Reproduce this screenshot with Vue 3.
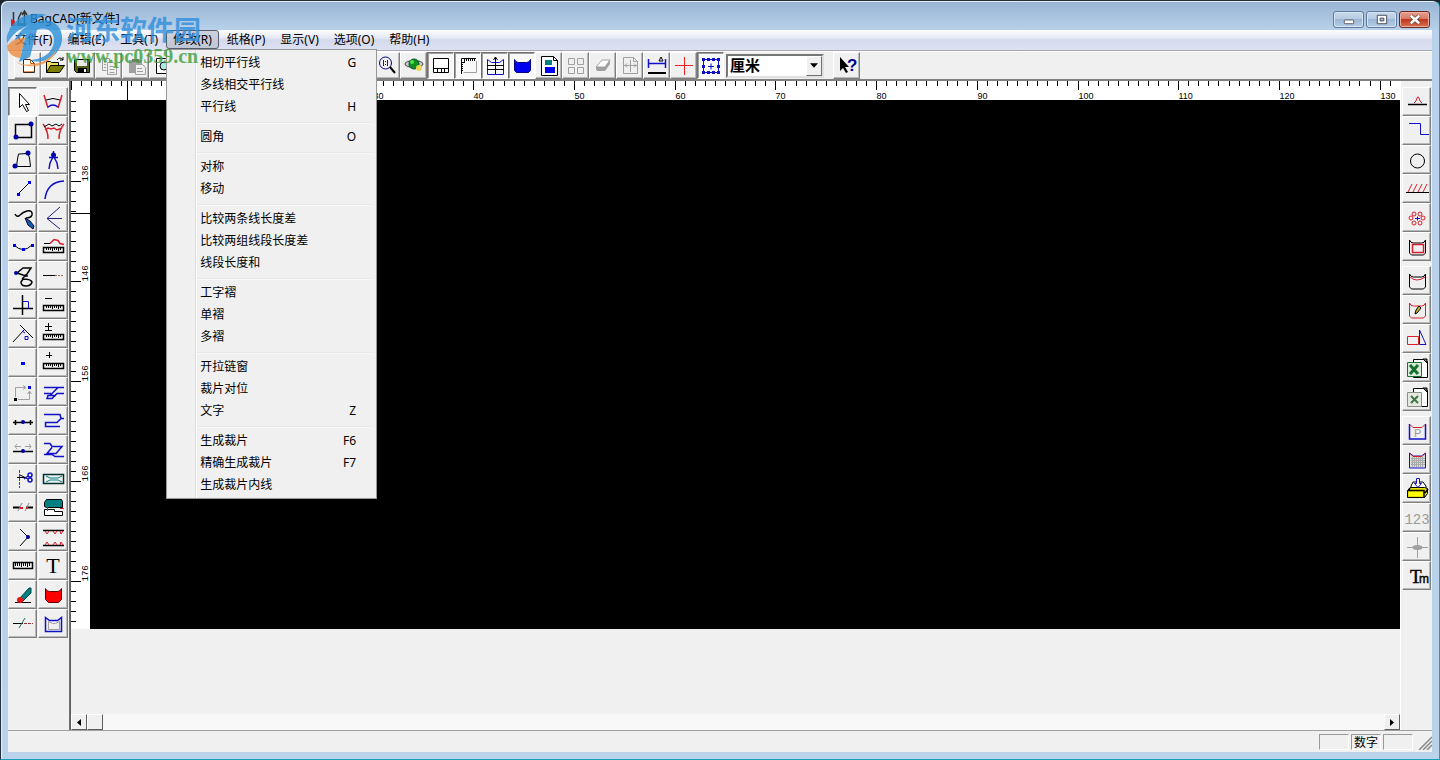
<script setup>
import { computed, onBeforeUnmount, onMounted, ref } from 'vue'

const unit = ref('厘米')

const menus = ['文件(F)', '编辑(E)', '工具(T)', '修改(R)', '纸格(P)', '显示(V)', '选项(O)', '帮助(H)']
const openMenu = '修改(R)'
const groups = [
  [['相切平行线', 'G'], ['多线相交平行线', ''], ['平行线', 'H']],
  [['圆角', 'O']],
  [['对称', ''], ['移动', '']],
  [['比较两条线长度差', ''], ['比较两组线段长度差', ''], ['线段长度和', '']],
  [['工字褶', ''], ['单褶', ''], ['多褶', '']],
  [['开拉链窗', ''], ['裁片对位', ''], ['文字', 'Z']],
  [['生成裁片', 'F6'], ['精确生成裁片', 'F7'], ['生成裁片内线', '']],
]

const line = (d, color = '#000', w = 1) => `<path d="${d}" fill="none" stroke="${color}" stroke-width="${w}"/>`
const fill = (d, color, stroke = 'none') => `<path d="${d}" fill="${color}" stroke="${stroke}"/>`
const dot = (x, y, r = 2, color = '#0000a8') => `<circle cx="${x}" cy="${y}" r="${r}" fill="${color}"/>`
const sq = (x, y, color = '#0000f0') => `<rect x="${x - 1}" y="${y - 1}" width="3" height="3" fill="${color}"/>`
const scale = (y) => line(`M2.5 ${y + 0.5}h20v5h-20z`, '#000', 1.5) + line(`M5.5 ${y + 3}v-2m2 2v-2m2 2v-2m2 3v-3m2 2v-2m2 2v-2m2 3v-3m2 2v-2`)
const RED = '#d8202c'
const BLUE = '#1010c8'
const GRAY = '#a0a0a0'
const TEAL = '#008080'
const pocket = 'M4.500 5q1 3 4 3h8q3 0 4-3v13l-2 2h-12l-2-2z'

const files = [
  { name: '新建', art: fill('M7.5 5.5h7l4 4v9h-11z', '#fff', '#3a2418') + line('M14.5 5.5v4h4', '#c86010') + line('M8 17.5h10', '#e09050') },
  { name: '打开', art: fill('M3.5 18.5v-11h4l1 1h7v3', '#f0e060', '#000') + fill('M3.5 18.5l4-7h14l-5 7z', '#808000', '#000') + line('M14 6q3-4 6 0m0-3v3h-3') },
  { name: '保存', art: fill('M4.5 5.5h15v13h-13l-2-2z', '#506018', '#000') + fill('M7 6h10v6H7z', '#e8e8e8') + fill('M8 14h9v5H8z', '#000') + fill('M14 15h2v3h-2z', '#fff') },
  { name: '复制', art: line('M5.5 4.5h7v3m-3 9h-4v-12M7 7.5h3m-3 3h2m-2 3h2M10.5 8.5h6l3 3v9h-9zm2 4h5m-5 3h5m-5 3h5', GRAY) },
  { name: '粘贴', art: fill('M5 6h13v13H5z', GRAY) + fill('M8 5h7v3H8z', '#777') + fill('M11.5 10.5h7l3 3v7h-10z', '#f0f0f0', GRAY) + line('M13 14.5h5m-5 3h6', GRAY) },
  { name: '预览', art: fill('M5.5 4.5h9l4 4v11h-13z', '#fff', '#000') + fill('M17 12a4 4 0 1 1-8 0a4 4 0 1 1 8 0', '#a8e8e8', '#000') },
]
const views = [
  { name: '缩放', art: line('M16.5 9a6 6 0 1 1-12 0a6 6 0 1 1 12 0', '#000090') + line('M8.5 6v6m4-6v6m-2-5v1m0 2v1', BLUE) + line('M15 13l5 6', '#000', 2) },
  { name: '视图', art: `<ellipse cx="12" cy="10" rx="9" ry="3.5" fill="#ccc" stroke="#444"/>` + fill('M17 10a5 5 0 1 1-10 0a5 5 0 1 1 10 0', '#109020', '#053') + dot(10, 8, 2, '#50e050') + dot(17, 14, 3, '#e8d850') },
  { name: '窗口', on: true, art: fill('M4.5 4.5h15v14h-15z', '#fff', '#000') + line('M4 14.5h16M8.5 15v4m4-4v4m3-4v4') },
  { name: '标尺', on: true, art: line('M20 4.5H5.5V20M8.5 4v4m2-4v3m2-3v3m2-3v3m2-3v3m2-3v3M5 8.5h4m-4 2h2m-2 2h2m-2 2h2m-2 2h2') + line('M20.5 7v11.5h-13', GRAY) },
  { name: '网格', on: true, art: line('M4.5 5.5l4 3h8l4-3v15h-16z', BLUE) + line('M4 11.5h17m-17 4h17M12.5 3v17m-2-14l2-3 2 3') },
  { name: '填充', on: true, art: fill('M4.5 5.5q1 3 4 3h8q3 0 4-3v11l-2 2h-12l-2-2z', '#0000f0', '#000080') },
  { name: '裁片', art: fill('M4.5 2.5h12l4 4v15h-16z', '#fff', '#000') + fill('M8 6h7v5H8z', TEAL) + fill('M8 13h10v6H8z', '#0000f0') + line('M16.5 2.5v4h4') },
  { name: '排列', art: line('M4.5 4.5h6v6h-6zm9 0h6v6h-6zm-9 9h6v6h-6zm9 0h6v6h-6z', GRAY) },
  { name: '橡皮', art: fill('M5 13l6-7h8l-5 7z', '#fff', GRAY) + fill('M5 13h9v4H6l-1-2zM14 13l5-7v4l-5 7z', GRAY) },
  { name: '页面', art: line('M5.5 3.5h10l4 4v12h-14zm10 0v4h4M6 11.5h13M12.5 6v12M9 9.5l-2 2 2 2M16 9.500l2 2-2 2', GRAY) },
  { name: '测量', art: line('M3.5 5v9m17-9v9M4 9.5h16', BLUE, 1.5) + line('M3 19h18', '#000', 2) + line('M14 7l2-4 2 4z') },
  { name: '十字', art: line('M3 11.5h18M12.5 3v18', '#f02020') },
  { name: '选框', on: true, art: line('M4.5 5.5h15v13h-15zM9 12.5h6m-3-3v6', BLUE) + [4, 9, 14, 19].map((x) => sq(x, 5, BLUE) + sq(x, 18, BLUE)).join('') + sq(4, 12, BLUE) + sq(19, 12, BLUE) },
]
const help = fill('M5 3v14l3-3 3 5 2-1-3-5h4z', '#000') + '<text x="12" y="17" font-size="17" font-weight="bold" fill="#000090" font-family="Liberation Sans, sans-serif">?</text>'

const leftTools = [
  ['选择', fill('M8.5 3.5v14l3-3 4 7 2-1-3-6h4z', '#fff', '#000'), true],
  ['弧边', line('M3 5l4 13M21 5l-4 13', RED, 1.5) + line('M5 10q7-3 14 0') + line('M7 17q5-4 10 0', BLUE, 1.5)],
  ['矩形', line('M4.5 5.5h16v13h-16z', '#000', 1.5) + dot(20, 5, 2.5) + dot(5, 18, 2.5)],
  ['褶边', line('M2 5q5 6 5 15M23 5q-5 6-5 15M4 11l3-2 3 1 3-1 3 2 5-2', RED, 1.5) + line('M3 8l5-3 3 2 4-2 3 2 3-2')],
  ['四边形', line('M17 5.5L7.5 6 6.5 11l-1 7.5h14L18.5 10z') + dot(17, 5, 2.5) + dot(4, 18, 2.5)],
  ['圆规', line('M12.5 3v4M8 9.5h9M12 9l-3 6-1 6M13 9l3 6 1 6', BLUE, 1.5) + dot(12.5, 7, 2.5)],
  ['直线', line('M7 17L18 6') + sq(7, 17) + sq(18, 5)],
  ['圆弧', line('M4 22Q6 5 23 4', BLUE, 1.5)],
  ['曲线', line('M4 8q2 4 5 1t7-4q6-1 5 4-1 3-6 3', '#000', 1.5) + fill('M14 12l5 3 4 5-1 3-5-4z', '#1060b0', '#003')],
  ['分线', line('M21 12.5H6M19 1L6 12.5 19 23', '#202080')],
  ['三点弧', line('M3 10q9 9 18 0') + sq(3, 10) + sq(12, 14) + sq(21, 10)],
  ['量曲线', line('M3 8.5h6') + line('M9 8.5l4-4 4 1 2 3 4 1', RED, 1.5) + scale(12)],
  ['自由曲线', line('M6 9l6-5h8l-4 6-5 5M6 9l6 2 5 1M12 15q8 0 9 3-1 4-6 4t-5-4z', '#000', 1.5) + dot(5, 9)],
  ['延长线', line('M2 11.5h12') + '<path d="M14 11.500h8" stroke="#a06050" stroke-dasharray="2 1"/>'],
  ['垂直线', line('M11.5 2v20M2 15.5h20', '#000', 1.5) + line('M11.5 8.5h6v7', BLUE)],
  ['减尺', line('M4 5.5h7') + scale(12)],
  ['角度', line('M2 20L13 8M9 3l13 13') + line('M11 9l3 2m0 3.5h3v3h-3z', BLUE)],
  ['加减尺', line('M4 4.5h7M7.5 1v7M4 8.5h7') + scale(12)],
  ['点', sq(11, 12) + sq(12, 12)],
  ['加尺', line('M5 4.5h6M8.5 1v6') + scale(12)],
  ['移点', line('M4.5 17V7.5H14m-2-2l3 2-3 2M7 19.5h11.5V12m-2 2l2-3 2 3', GRAY) + sq(4, 19, '#000') + sq(18, 7)],
  ['连接一', line('M3 7.5h20M17 7.5l-8 8M3 13.5h7M23 13.5h-7l-5 5H6l1-3h8', BLUE, 1.5)],
  ['线上点', line('M2 13.5h20M4.5 11v5M19.5 11v5', '#000', 1.5) + dot(12, 13)],
  ['连接二', line('M3 5.5h16l1 4h3M20 9.5l-4 4H4.5v4H19', BLUE, 1.5)],
  ['移动点', line('M2 13.5h20', '#000', 1.5) + line('M4 8.5h6m4 0h6M6 6L4 8.5 6 11M18 6l2 2.5-2 2.5', GRAY) + dot(12, 13)],
  ['连接三', line('M3 5.5h6l2 3h10l-6 7H6l5-6M3 16.500h8l3 2h9', BLUE, 1.5)],
  ['剪切', line('M6 10.5h9M9 8l8 4') + line('M13 12l4-3m4-1a2 2 0 1 1-4 0a2 2 0 1 1 4 0m0 5a2 2 0 1 1-4 0a2 2 0 1 1 4 0', BLUE, 1.5) + '<path d="M8.5 3v18" stroke="#803030" stroke-dasharray="3 1"/>'],
  ['拉链', line('M2.500 7.5h20v9h-20z', '#003030', 1.5) + line('M5 9l4 2h8l4-2M5 15l4-2h8l4 2', TEAL)],
  ['断开', line('M2 11.5h7M15 11.5h7', '#000', 2) + line('M7 15l4-8M14 15l4-8', '#888') + line('M9 12h3m3 0h2', RED, 2)],
  ['缝纫', fill('M5.5 3.5h15l1 2v6h-16l-2-1v-4z', TEAL, '#000') + fill('M3.5 13.5h10v2h8v4h-18z', '#fff', '#000') + line('M6.5 11v4M19 12.5h4', RED)],
  ['夹角', line('M9 4l8 8-8 9') + dot(17, 12)],
  ['花边', line('M2 5.5h21M2 20.5h21', '#000', 1.5) + line('M4 6l2 3 2-3m4 0l2 3 2-3m3 0l1 3 2-3M4 20l2-3 2 3m4 0l2-3 2 3m3 0l1-3 2 3', RED)],
  ['直尺', line('M2.5 8.5h19v6h-19z', '#000', 1.5) + line('M4.5 12V9m2 3V9m2 3V9m2 4V9m2 3V9m2 3V9m2 4V9m2 3V9')],
  ['文字', '<text x="12" y="19" text-anchor="middle" font-size="22" font-family="Liberation Serif, serif">T</text>'],
  ['擦除', line('M4 19.5h16') + fill('M9 15l9-10h2v5l-9 9z', TEAL, '#044') + dot(9, 17, 3, '#f01010')],
  ['实面', fill('M4.5 5.5q1 3 4 3h8q3 0 4-3v11l-3 3h-10l-3-3z', '#ff0000', '#600000')],
  ['分割', line('M2 11.5h10') + line('M8 16l6-10', '#207050') + '<path d="M13 11.5h9" stroke="#903030" stroke-dasharray="3 1"/>'],
  ['内框', line('M4.5 5.5l4 3h8l4-3v14h-16z', BLUE, 1.5) + line('M7.5 17.5v-8l4 2h3l4-2v8z', GRAY)],
].map(([name, art, on]) => ({ name, art, on }))

const sheet = fill('M8.5 3.5h12l2 2v16h-14z', '#fff', '#000') + fill('M18 3h4v4z', '#777', '#000')
const rightTools = [
  [
    ['凸点', line('M3 14.5h19', '#000', 1.5) + line('M9 13l2-2 1.5-4h1l1.500 4 2 2', RED)],
    ['折线', line('M4 4.5h11.500v11H24', BLUE)],
    ['圆', line('M19.500 13a7 7 0 1 1-14 0a7 7 0 1 1 14 0')],
    ['斜纹', line('M1 15.5h23') + line('M3 15l4-8m1 8l4-8m1 8l4-8m1 8l4-8', RED)],
    ['花形', [[6, 12], [9, 8], [15, 8], [18, 12], [15, 17], [9, 17]].map(([x, y]) => `<circle cx="${x}" cy="${y}" r="2" fill="none" stroke="${RED}"/>`).join('') + line('M10 12.500h5m-2.500-2v4', BLUE)],
    ['双框', line(pocket) + line('M7.500 9.500h11v8h-11z', RED, 1.5)],
  ],
  [
    ['边框', line(pocket) + line('M5 8q3 3 7 3t8-3', RED)],
    ['编辑边框', line(pocket, RED) + fill('M10 16l1-4 3-4 2 2-4 5z', '#c8b830', '#000')],
    ['镜像', line('M2.500 9.500h11v8h-11z', RED) + line('M14.500 3v14.500h6.500z', BLUE)],
    ['导出', sheet + fill('M2.500 6.500h14v14h-14z', '#d8ecd8', '#187030') + line('M5 9l8 9M13 9l-8 9', '#187030', 3)],
    ['导出二', sheet + fill('M2.500 7.500h14v14h-14z', '#e4e8e0', '#889080') + line('M6 11l7 7M13 11l-7 7', '#407848', 2)],
  ],
  [
    ['属性', line('M4.500 5v15h16V5', BLUE, 1.5) + line('M5 5.500l3 3h9l3-3', RED) + '<text x="9" y="18" font-size="11" fill="#999" font-family="Liberation Sans, sans-serif">P</text>'],
    ['纹理', fill('M4.500 5l4 3h8l4-3v15h-16z', '#ddd', BLUE) + line('M6 10.500h14m-14 2h14m-14 2h14m-14 2h14M7.500 9v10m2-10v10m2-10v10m2-10v10m2-10v10m2-10v10', '#aaa') + line('M5 5.500l3 3h9l3-3', RED)],
    ['打印', fill('M6 9l2-4h10l3 4v5H6z', '#fff', '#000') + fill('M2.500 20.500v-7l3-3h14l3 1v5l-3 4z', '#e8e000', '#000') + line('M3 13.500h16v7M5 11l-2 3M20 16l3-4', '#000', 1.5) + fill('M4 15h14v4H4z', '#ffff00') + fill('M11.500 1.500h3v5h2l-3.500 4-3.500-4h2z', '#fff', BLUE)],
    ['编号', '<text x="12" y="18" text-anchor="middle" font-size="14" fill="#999" font-family="Liberation Mono, monospace">123</text>'],
    ['定位', line('M2 12.500h21M12.500 2v21', GRAY) + '<ellipse cx="12.500" cy="12.500" rx="5" ry="2.500" fill="#a0a0a0"/>'],
    ['字体', '<text x="5" y="19" font-size="19" stroke="#000" stroke-width="0.400" font-family="Liberation Serif, serif">T</text><text x="14" y="19" font-size="12" stroke="#000" stroke-width="0.400" font-family="Liberation Sans, sans-serif">m</text>'],
  ],
].map((g) => g.map(([name, art]) => ({ name, art })))

const work = ref(null)
const rulerWidth = ref(1329)
const rulerHeight = ref(549)
const hTicks = computed(() =>
  Array.from({ length: Math.floor(rulerWidth.value / 10.07) + 1 }, (_, i) => ({ n: i, x: Math.round(i * 10.07 - 0.5) + 0.5, major: i % 10 === 0 })),
)
const vTicks = computed(() =>
  Array.from({ length: Math.floor(rulerHeight.value / 10) + 1 }, (_, i) => ({ n: 126 + i, y: i * 10 + 1.5, major: i % 10 === 0 })),
)
let observer
onMounted(() => {
  const measure = () => {
    rulerWidth.value = work.value.clientWidth
    rulerHeight.value = work.value.querySelector('.stage').clientHeight + 19
  }
  observer = new ResizeObserver(measure)
  observer.observe(work.value)
  measure()
})
onBeforeUnmount(() => observer.disconnect())
</script>

<template>
  <div class="window">
    <header class="title-bar">
      <svg class="app-icon" viewBox="0 0 18 18" aria-hidden="true">
        <path d="M3.500 2v13M8.500 8v7M14.500 1v14M12 5l2.500-4L17 5M8.500 8l3-6" fill="none" stroke="#333" stroke-width="1.500" />
        <path d="M1 9l4 2v5H1z" fill="#d82020" /><path d="M7 13h9v3H7z" fill="#287068" />
      </svg>
      <h1>BagCAD[新文件]</h1>
      <div class="captions">
        <button aria-label="最小化"><svg viewBox="0 0 30 16"><rect x="10.500" y="8.500" width="10" height="4" rx="1" fill="#fff" stroke="#555" /></svg></button>
        <button aria-label="最大化"><svg viewBox="0 0 30 16"><path d="M10.500 3.500h10v9h-10zM13.500 6.500v3h4v-3z" fill="#fff" fill-rule="evenodd" stroke="#445" /></svg></button>
        <button class="close" aria-label="关闭"><svg viewBox="0 0 30 16"><path d="M11 4l9 8M20 4l-9 8" stroke="#554" stroke-width="4" /><path d="M11 4l9 8M20 4l-9 8" stroke="#fff" stroke-width="2.500" /></svg></button>
      </div>
    </header>

    <nav class="menu-bar">
      <div v-for="m in menus" :key="m" class="menu">
        <button class="menu-title" :class="{ open: m === openMenu }">{{ m }}</button>
        <div v-if="m === openMenu" class="popup" role="menu">
          <div v-for="(g, i) in groups" :key="i" class="group">
            <button v-for="item in g" :key="item[0]" class="item" role="menuitem">
              <span>{{ item[0] }}</span><kbd>{{ item[1] }}</kbd>
            </button>
          </div>
        </div>
      </div>
    </nav>

    <div class="tool-bar">
      <div class="file-tools">
        <button v-for="t in files" :key="t.name" class="tool" :aria-label="t.name"><svg viewBox="0 0 24 24" v-html="t.art" /></button>
      </div>
      <button v-for="t in views" :key="t.name" class="tool" :class="{ on: t.on }" :aria-label="t.name"><svg viewBox="0 0 24 24" v-html="t.art" /></button>
      <div class="combo">
        <select v-model="unit" aria-label="单位"><option>厘米</option></select>
        <span class="drop" aria-hidden="true"><svg viewBox="0 0 9 5"><path d="M0 0h9L4.500 5z" /></svg></span>
      </div>
      <button class="tool" aria-label="帮助"><svg viewBox="0 0 24 24" v-html="help" /></button>
    </div>

    <main class="body">
      <aside class="left-tools">
        <button v-for="t in leftTools" :key="t.name" class="tool" :class="{ on: t.on }" :aria-label="t.name"><svg viewBox="0 0 24 24" v-html="t.art" /></button>
      </aside>

      <section ref="work" class="work">
        <svg class="h-ruler" aria-hidden="true">
          <g v-for="t in hTicks" :key="t.n">
            <path :d="`M${t.x} 0v${t.major ? 9 : 5}`" stroke="#000" />
            <text v-if="t.major && t.n" :x="t.x" y="18">{{ t.n }}</text>
          </g>
          <path d="M56.500 0v19" stroke="#000" />
        </svg>
        <div class="stage">
          <svg class="v-ruler" aria-hidden="true">
            <g transform="translate(0 -20)">
              <g v-for="t in vTicks" :key="t.n">
                <path :d="`M0 ${t.y}h${t.major ? 10 : 5}`" stroke="#000" />
                <text v-if="t.major && t.y > 20" :transform="`translate(17 ${t.y}) rotate(-90)`">{{ t.n }}</text>
              </g>
              <path d="M0 133.500h19" stroke="#000" />
            </g>
          </svg>
          <div class="canvas"></div>
        </div>
        <div class="scroll">
          <button aria-label="向左滚动"><svg viewBox="0 0 4 7"><path d="M4 0v7L0 3.500z" /></svg></button>
          <button aria-label="滑块"></button>
          <button class="end" aria-label="向右滚动"><svg viewBox="0 0 4 7"><path d="M0 0v7l4-3.500z" /></svg></button>
        </div>
      </section>

      <aside class="right-tools">
        <div v-for="(g, i) in rightTools" :key="i" class="right-group">
          <button v-for="t in g" :key="t.name" class="tool" :aria-label="t.name"><svg viewBox="0 0 24 24" v-html="t.art" /></button>
        </div>
      </aside>
    </main>

    <footer class="status">
      <span class="pane"></span><span class="pane">数字</span><span class="pane"></span>
      <svg class="grip" viewBox="0 0 14 14" aria-hidden="true"><path d="M1 14L14 1M5 14l9-9M9 14l5-5" stroke="#888" stroke-width="1.500" /></svg>
    </footer>

    <div class="watermark">
      <svg viewBox="0 0 60 56" aria-hidden="true">
        <path d="M2 31C0 10 22-2 42 3c-8 1-12 5-15 10C14 15 8 23 2 31z" fill="#2b8fd8" />
        <path d="M27 12C44 2 59 13 57 29 54 46 37 53 24 48c15 0 25-9 25-20 0-9-9-14-17-10l-7 27-11 5 7-28c-6 2-11 7-14 15 2-12 9-21 20-25z" fill="#2b8fd8" />
        <path d="M2 34c5-6 11-8 18-8l-5 20C7 45 3 41 2 34z" fill="#ee8c3c" />
        <path d="M10 50c18 7 36-1 42-14-4 15-22 24-42 14z" fill="#ee8c3c" />
      </svg>
      <div class="brand"><strong>河东软件园</strong><span>www.pc0359.cn</span></div>
    </div>
  </div>
</template>

<style>
body {
  margin: 0;
  background: #1c2430;
}
</style>

<style scoped>
* {
  box-sizing: border-box;
}
.window {
  position: relative;
  display: flex;
  flex-direction: column;
  min-height: 100vh;
  padding: 0 7px 7px;
  border: 1px solid #24303c;
  border-right-color: #18a0b8;
  border-bottom-color: #18a0b8;
  border-radius: 7px 7px 0 0;
  background: linear-gradient(#98b4d4, #b9d1ea 30px, #bad2ea);
  box-shadow: inset 1px 1px 0 #e4eef8;
  font: 12px/16px "Noto Sans", "Noto Sans CJK SC", sans-serif;
  color: #000;
}
button {
  margin: 0;
  padding: 0;
  border: 0;
  background: none;
  font: inherit;
  color: inherit;
}
svg {
  display: block;
}
.title-bar {
  display: flex;
  align-items: center;
  height: 29px;
  padding-top: 7px;
}
.app-icon {
  width: 18px;
  height: 18px;
  margin-left: 2px;
}
h1 {
  flex: 1;
  margin: 0 0 0 2px;
  font: inherit;
}
.captions {
  display: flex;
  gap: 2px;
  padding-right: 2px;
}
.captions button {
  width: 31px;
  height: 17px;
  border: 1px solid #5f7a9a;
  border-radius: 3px;
  background: linear-gradient(#c8daee, #b4cae2 50%, #9cb8d6 50%, #b4cce6);
  box-shadow: inset 0 0 0 1px #d8e6f4;
}
.captions svg {
  width: 29px;
  height: 15px;
}
.captions .close {
  border-color: #6c2820;
  background: linear-gradient(#e8a090, #d87460 50%, #c03820 50%, #d87050);
  box-shadow: inset 0 0 0 1px #ecb0a0;
}
.menu-bar {
  display: flex;
  gap: 1px;
  height: 21px;
  background: linear-gradient(#fcfdff, #e4e8f4 40%, #d4daec 50%, #dce2f2);
  border-bottom: 1px solid #a8a8b0;
}
.menu {
  position: relative;
}
.menu-title {
  height: 19px;
  padding: 0 6px;
  border: 1px solid transparent;
  border-radius: 3px;
  line-height: 17px;
  white-space: nowrap;
}
.menu-title.open {
  border-color: #555c6c;
  background: linear-gradient(#cdd2de, #c0c6d4);
}
.popup {
  position: absolute;
  z-index: 3;
  top: 19px;
  left: 0;
  width: 211px;
  padding: 2px;
  border: 1px solid #979797;
  background: linear-gradient(90deg, #f0f0f0 28px, #dedede 28px, #dedede 29px, #fff 29px, #fff 30px, #f0f0f0 30px);
}
.group + .group {
  padding-top: 8px;
  background: linear-gradient(#e0e0e0, #fff) 28px 4px / 100% 2px no-repeat;
}
.item {
  display: flex;
  align-items: center;
  justify-content: space-between;
  width: 100%;
  height: 22px;
  padding: 0 18px 0 31px;
  text-align: left;
}
kbd {
  font: inherit;
}
.tool-bar {
  display: flex;
  align-items: center;
  height: 30px;
  padding-left: 6px;
  background: #f0f0f0;
  border-top: 1px solid #fff;
  border-bottom: 2px solid #808080;
}
.file-tools {
  display: flex;
  width: 359px;
}
.tool {
  display: flex;
  flex: none;
  align-items: center;
  justify-content: center;
  width: 27px;
  height: 27px;
  background: #f0f0f0;
  border: 1px solid;
  border-color: #fff #808080 #808080 #fff;
  box-shadow: inset -1px -1px 0 #b8b8b8;
}
.tool svg {
  flex: none;
  width: 24px;
  height: 24px;
}
.tool.on {
  background: #f8f8f8;
  border-color: #707070 #fff #fff #707070;
  box-shadow: inset 1px 1px 0 #a0a0a0;
}
.combo {
  position: relative;
  width: 98px;
  height: 24px;
  margin: 0 9px 0 2px;
}
select {
  display: block;
  width: 100%;
  height: 100%;
  padding: 0 2px 3px;
  appearance: none;
  border: 2px solid;
  border-color: #777 #e0e0e0 #e0e0e0 #777;
  border-radius: 0;
  background: #fff;
  color: #000;
  font: bold 15px/17px "Noto Sans CJK SC", sans-serif;
}
.drop {
  position: absolute;
  top: 2px;
  right: 2px;
  bottom: 2px;
  display: flex;
  align-items: center;
  justify-content: center;
  width: 16px;
  background: #f0f0f0;
  border: 1px solid;
  border-color: #fff #707070 #707070 #fff;
  pointer-events: none;
}
.drop svg {
  width: 8px;
  height: 5px;
}
.body {
  display: flex;
  flex: 1;
  background: #f0f0f0;
}
.left-tools {
  display: grid;
  grid-template-columns: 29px 30px;
  grid-auto-rows: 29px;
  column-gap: 1px;
  align-content: start;
  width: 62px;
  padding-top: 6px;
  border-right: 1px solid #707070;
}
.left-tools .tool,
.right-tools .tool {
  width: 100%;
  height: 29px;
}
.work {
  display: flex;
  flex: 1;
  flex-direction: column;
  min-width: 0;
  border-left: 1px solid #606060;
}
.h-ruler {
  flex: none;
  width: 100%;
  height: 19px;
  background: #fff;
}
.stage {
  display: flex;
  flex: 1;
}
.v-ruler {
  flex: none;
  width: 19px;
  height: auto;
  min-height: 400px;
  background: #fff;
}
.h-ruler text {
  font: 9px "Liberation Sans", sans-serif;
}
.v-ruler text {
  font: 9px "Liberation Mono", monospace;
}
.canvas {
  flex: 1;
  background: #000;
}
.scroll {
  display: flex;
  height: 16px;
  margin-top: 85px;
  background: #f8f8f8;
}
.scroll button {
  display: flex;
  align-items: center;
  justify-content: center;
  width: 16px;
  background: #f0f0f0;
  border: 1px solid;
  border-color: #fff #606060 #606060 #fff;
}
.scroll svg {
  width: 4px;
  height: 7px;
}
.scroll .end {
  margin-left: auto;
}
.right-tools {
  display: flex;
  flex-direction: column;
  gap: 5px;
  width: 32px;
  padding: 6px 1px 0;
  border-left: 1px solid #fff;
}
.status {
  display: flex;
  justify-content: flex-end;
  gap: 2px;
  height: 22px;
  padding: 3px 0 2px;
  background: #f0f0f0;
  border-top: 1px solid #a0a0a0;
}
.pane {
  width: 30px;
  padding-left: 2px;
  border: 1px solid;
  border-color: #999 #fff #fff #999;
  white-space: nowrap;
  line-height: 15px;
}
.grip {
  width: 14px;
  height: 14px;
  margin-left: 3px;
  align-self: flex-end;
}
.watermark {
  position: absolute;
  z-index: 4;
  top: 11px;
  left: 4px;
  display: flex;
  gap: 1px;
  opacity: 0.8;
  pointer-events: none;
}
.watermark svg {
  width: 60px;
  height: 56px;
}
.brand {
  display: flex;
  flex-direction: column;
}
.brand strong {
  font: bold 27px/34px "Noto Sans CJK SC", sans-serif;
  color: #2f8fdc;
}
.brand span {
  font: bold 20px/20px "Liberation Serif", serif;
  color: #3ca03c;
}
</style>
